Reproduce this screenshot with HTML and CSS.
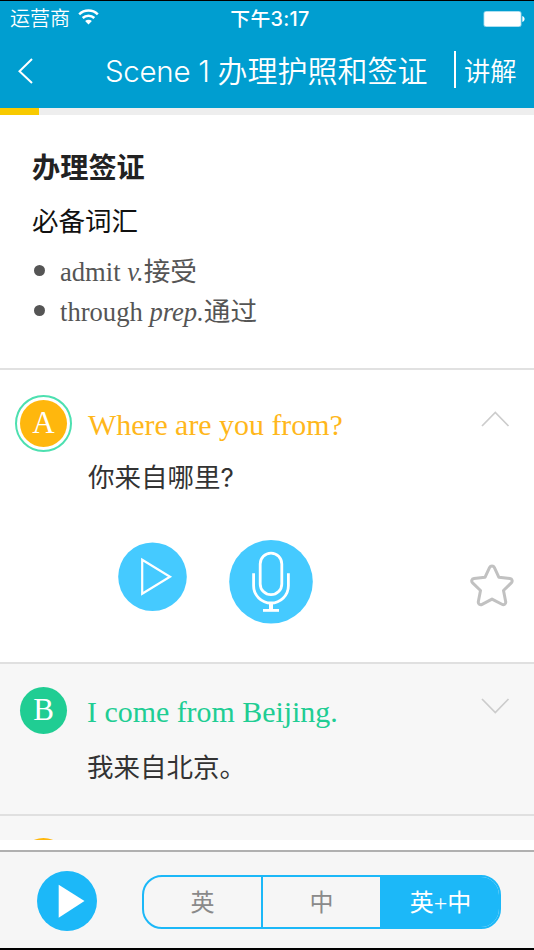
FILE: index.html
```html
<!DOCTYPE html>
<html lang="zh-CN">
<head>
<meta charset="utf-8">
<title>Scene 1 办理护照和签证</title>
<link rel="stylesheet" href="styles.css">
</head>
<body>
<div class="app">
  <header class="header">
    <div class="status">
      <div class="carrier"><span>运营商</span>
        <svg class="wifi" width="21" height="16" viewBox="0 0 21 16" fill="none" stroke="#fff" stroke-width="2.5"><path d="M1.2 5.4a13.3 13.3 0 0 1 18.6 0M4.7 9a8.3 8.3 0 0 1 11.6 0"/><path d="M10.5 15.4 7.1 12a4.9 4.9 0 0 1 6.8 0z" fill="#fff" stroke="none"/></svg>
      </div>
      <time class="clock">下午3:17</time>
      <svg class="battery" width="42" height="18" viewBox="0 0 42 18"><rect x=".5" y="1" width="38" height="16" rx="2.5" fill="#8fd4ec"/><rect x="1.3" y="1.8" width="36.4" height="14.4" rx="2" fill="#fff"/><path d="M39.3 6c3 1.200 3 4.800 0 6z" fill="#fff"/></svg>
    </div>
    <nav class="nav">
      <svg class="back" width="18" height="28" viewBox="0 0 18 28" fill="none" stroke="#fff" stroke-width="2"><path d="M15 2 2.500 14.200 15 26"/></svg>
      <h1 class="title"><span class="scene">Scene 1</span>办理护照和签证</h1>
      <span class="divider"></span>
      <span class="explain">讲解</span>
    </nav>
  </header>
  <div class="progress"><div class="progress-bar"></div></div>

  <main class="content">
    <section class="vocab">
      <h2>办理签证</h2>
      <h3>必备词汇</h3>
      <ul>
        <li>admit <i>v.</i>接受</li>
        <li>through <i>prep.</i>通过</li>
      </ul>
    </section>

    <section class="line line-a">
      <div class="row">
        <div class="avatar-ring"><div class="avatar avatar-a">A</div></div>
        <div class="texts"><p class="en en-a">Where are you from?</p><p class="zh">你来自哪里<span class="mark">?</span></p></div>
        <svg class="chevron" width="30" height="18" viewBox="0 0 30 18" fill="none" stroke="#ccc" stroke-width="1.700"><path d="M2 16 15.300 2.500 28.500 16"/></svg>
      </div>
      <div class="controls">
        <svg class="play" width="70" height="70" viewBox="0 0 70 70"><circle cx="34.500" cy="34.800" r="34.300" fill="#45caff"/><path d="M24.200 17.700v34L52 34.700z" fill="none" stroke="#fff" stroke-width="2.200"/></svg>
        <svg class="mic" width="84" height="84" viewBox="0 0 84 84"><circle cx="42" cy="41.800" r="41.800" fill="#45caff"/><g fill="none" stroke="#fff" stroke-width="2.800"><rect x="31.200" y="13.200" width="21.600" height="41.500" rx="10.800"/><path d="M24.600 33.200v12.500c0 9.500 7.800 17.300 17.400 17.300S59.400 55.200 59.400 45.700V33.200"/><path d="M42 62.500v7.500" stroke-width="4"/><path d="M34 70.400h16"/></g></svg>
        <svg class="star" width="46" height="46" viewBox="0 0 46 46" fill="none" stroke="#c1c1c1" stroke-width="3" stroke-linejoin="round"><path d="M20.600 4.400c1-1.800 3.800-1.800 4.700 0L29.900 14.300l11 1.300c2.300.3 3 2.700 1.400 4.300L34.500 27.500l2.200 11.200c.3 2.300-1.800 3.700-3.800 2.600L23 36.100l-9.900 5.200c-2 1.100-4.100-.3-3.800-2.600l2.200-11.200-7.900-7.600c-1.600-1.600-.9-4 1.400-4.300l11-1.300z"/></svg>
      </div>
    </section>

    <section class="line line-b">
      <div class="row">
        <div class="avatar avatar-b">B</div>
        <div class="texts"><p class="en en-b">I come from Beijing.</p><p class="zh">我来自北京。</p></div>
        <svg class="chevron" width="30" height="18" viewBox="0 0 30 18" fill="none" stroke="#ccc" stroke-width="1.700"><path d="M2 2 15.300 15.500 28.500 2"/></svg>
      </div>
    </section>

    <section class="line line-c"><div class="avatar avatar-a"></div></section>
  </main>

  <footer class="footer">
    <svg class="play-all" width="60" height="60" viewBox="0 0 60 60"><circle cx="30" cy="30" r="30" fill="#1cb8f8"/><path d="M21.700 13.700v33L47.500 30z" fill="#fff"/></svg>
    <div class="segments"><span class="segment">英</span><span class="segment">中</span><span class="segment active">英+中</span></div>
  </footer>
</div>
</body>
</html>
```

FILE: styles.css
```css
* { box-sizing: border-box; margin: 0; padding: 0; }
body { width: 534px; height: 950px; overflow: hidden; background: #fff; }
.app {
  display: flex; flex-direction: column; width: 534px; height: 950px;
  border-top: 1px solid #000; border-bottom: 2px solid #000;
  font-family: "Liberation Serif", "Noto Sans CJK SC", serif;
}
.header { height: 107px; background: #009ed0; color: #fff; font-family: Inter, "Noto Sans CJK SC", sans-serif; white-space: nowrap; }
.status { display: grid; grid-template-columns: 1fr auto 1fr; align-items: center; height: 35px; padding: 0 9px 0 10px; }
.carrier { display: flex; align-items: center; gap: 8px; font-size: 20px; font-weight: 350; line-height: 34px; }
.wifi { margin-top: -3px; }
.clock { font-size: 19.800px; line-height: 34px; font-weight: 500; padding-left: 5px; letter-spacing: .3px; }
.battery { justify-self: end; }
.nav { display: flex; align-items: center; height: 70px; padding-left: 17px; font-weight: 350; }
.title { margin-left: 70px; width: 349px; font-size: 30px; font-weight: 350; line-height: 70px; }
.scene { margin-right: 8px; font-size: 29.500px; font-weight: 350; letter-spacing: -.3px; }
.divider { width: 2px; height: 37px; background: #fff; margin-top: -3px; }
.explain { margin-left: 8px; font-size: 26.300px; line-height: 70px; padding-top: 2px; }
.progress { height: 7px; background: #eee; flex: none; }
.progress-bar { width: 39px; height: 7px; background: #f8ca00; }
.content { height: 725px; overflow: hidden; }
.vocab { height: 255px; padding: 34px 32px 0; border-bottom: 2px solid #e1e1e1; }
.vocab h2 { font-size: 28.200px; line-height: 40px; color: #222; font-weight: 700; }
.vocab h3 { margin-top: 13px; font-size: 26.500px; line-height: 40px; color: #111; font-weight: 400; }
.vocab ul { margin-top: 10px; list-style: none; }
.vocab li { display: flex; align-items: center; height: 40px; font-size: 26.600px; line-height: 40px; color: #555; white-space: pre; }
.vocab li::before { content: ""; width: 11px; height: 11px; margin: -3px 15px 0 2px; border-radius: 50%; background: #555; }
.line { border-bottom: 2px solid #e0e0e0; }
.row { display: flex; align-items: flex-start; }
.line-a { height: 294px; padding-top: 25px; }
.avatar-ring { width: 57px; height: 57px; margin-left: 15px; padding: 3px; border: 2px solid #4de0b0; border-radius: 50%; }
.avatar { width: 47px; height: 47px; border-radius: 50%; color: #fff; font-size: 31px; line-height: 46px; text-align: center; }
.avatar-a { background: #ffb70d; }
.avatar-b { background: #20cd93; margin-left: 20px; }
.texts { width: 392px; margin-left: 16px; white-space: nowrap; }
.en { font-size: 29.900px; line-height: 40px; }
.en-a { color: #ffb71b; margin-top: 10px; }
.en-b { color: #20cd93; margin-top: 5px; }
.zh { margin-top: 11px; font-family: "Noto Sans CJK SC", sans-serif; font-size: 26.500px; line-height: 40px; color: #333; }
.mark { font-family: Inter, sans-serif; font-size: 26px; line-height: 1; }
.line-a .chevron { margin-top: 15px; }
.controls { display: flex; align-items: flex-start; height: 84px; margin-top: 44px; padding-left: 118px; }
.play { margin-top: 2px; }
.mic { margin-left: 41px; }
.star { margin: 23px 0 0 156px; }
.line-b { height: 152px; padding-top: 23px; background: #f7f7f7; }
.line-b .texts { width: 393px; margin-left: 20px; }
.line-b .zh { margin-top: 14px; }
.line-b .chevron { margin-top: 10px; }
.line-c { height: 25px; padding: 22px 0 0 20px; background: #f7f7f7; border: 0; overflow: hidden; }
.footer { display: flex; align-items: center; flex: 1; margin-top: 10px; padding: 2px 0 0 37px; border-top: 2px solid #b0b0b0; background: #f6f6f6; }
.segments { display: grid; grid-template-columns: 117px 119px 1fr; width: 359px; height: 54px; margin: 2px 0 0 45px; border: 2px solid #1cb8f8; border-radius: 20px; overflow: hidden; color: #8a8a8a; font-size: 24px; line-height: 53px; text-align: center; }
.segment { height: 50px; }
.segment + .segment { border-left: 2px solid #1cb8f8; }
.active { color: #fff; background: #1cb8f8; }
```
